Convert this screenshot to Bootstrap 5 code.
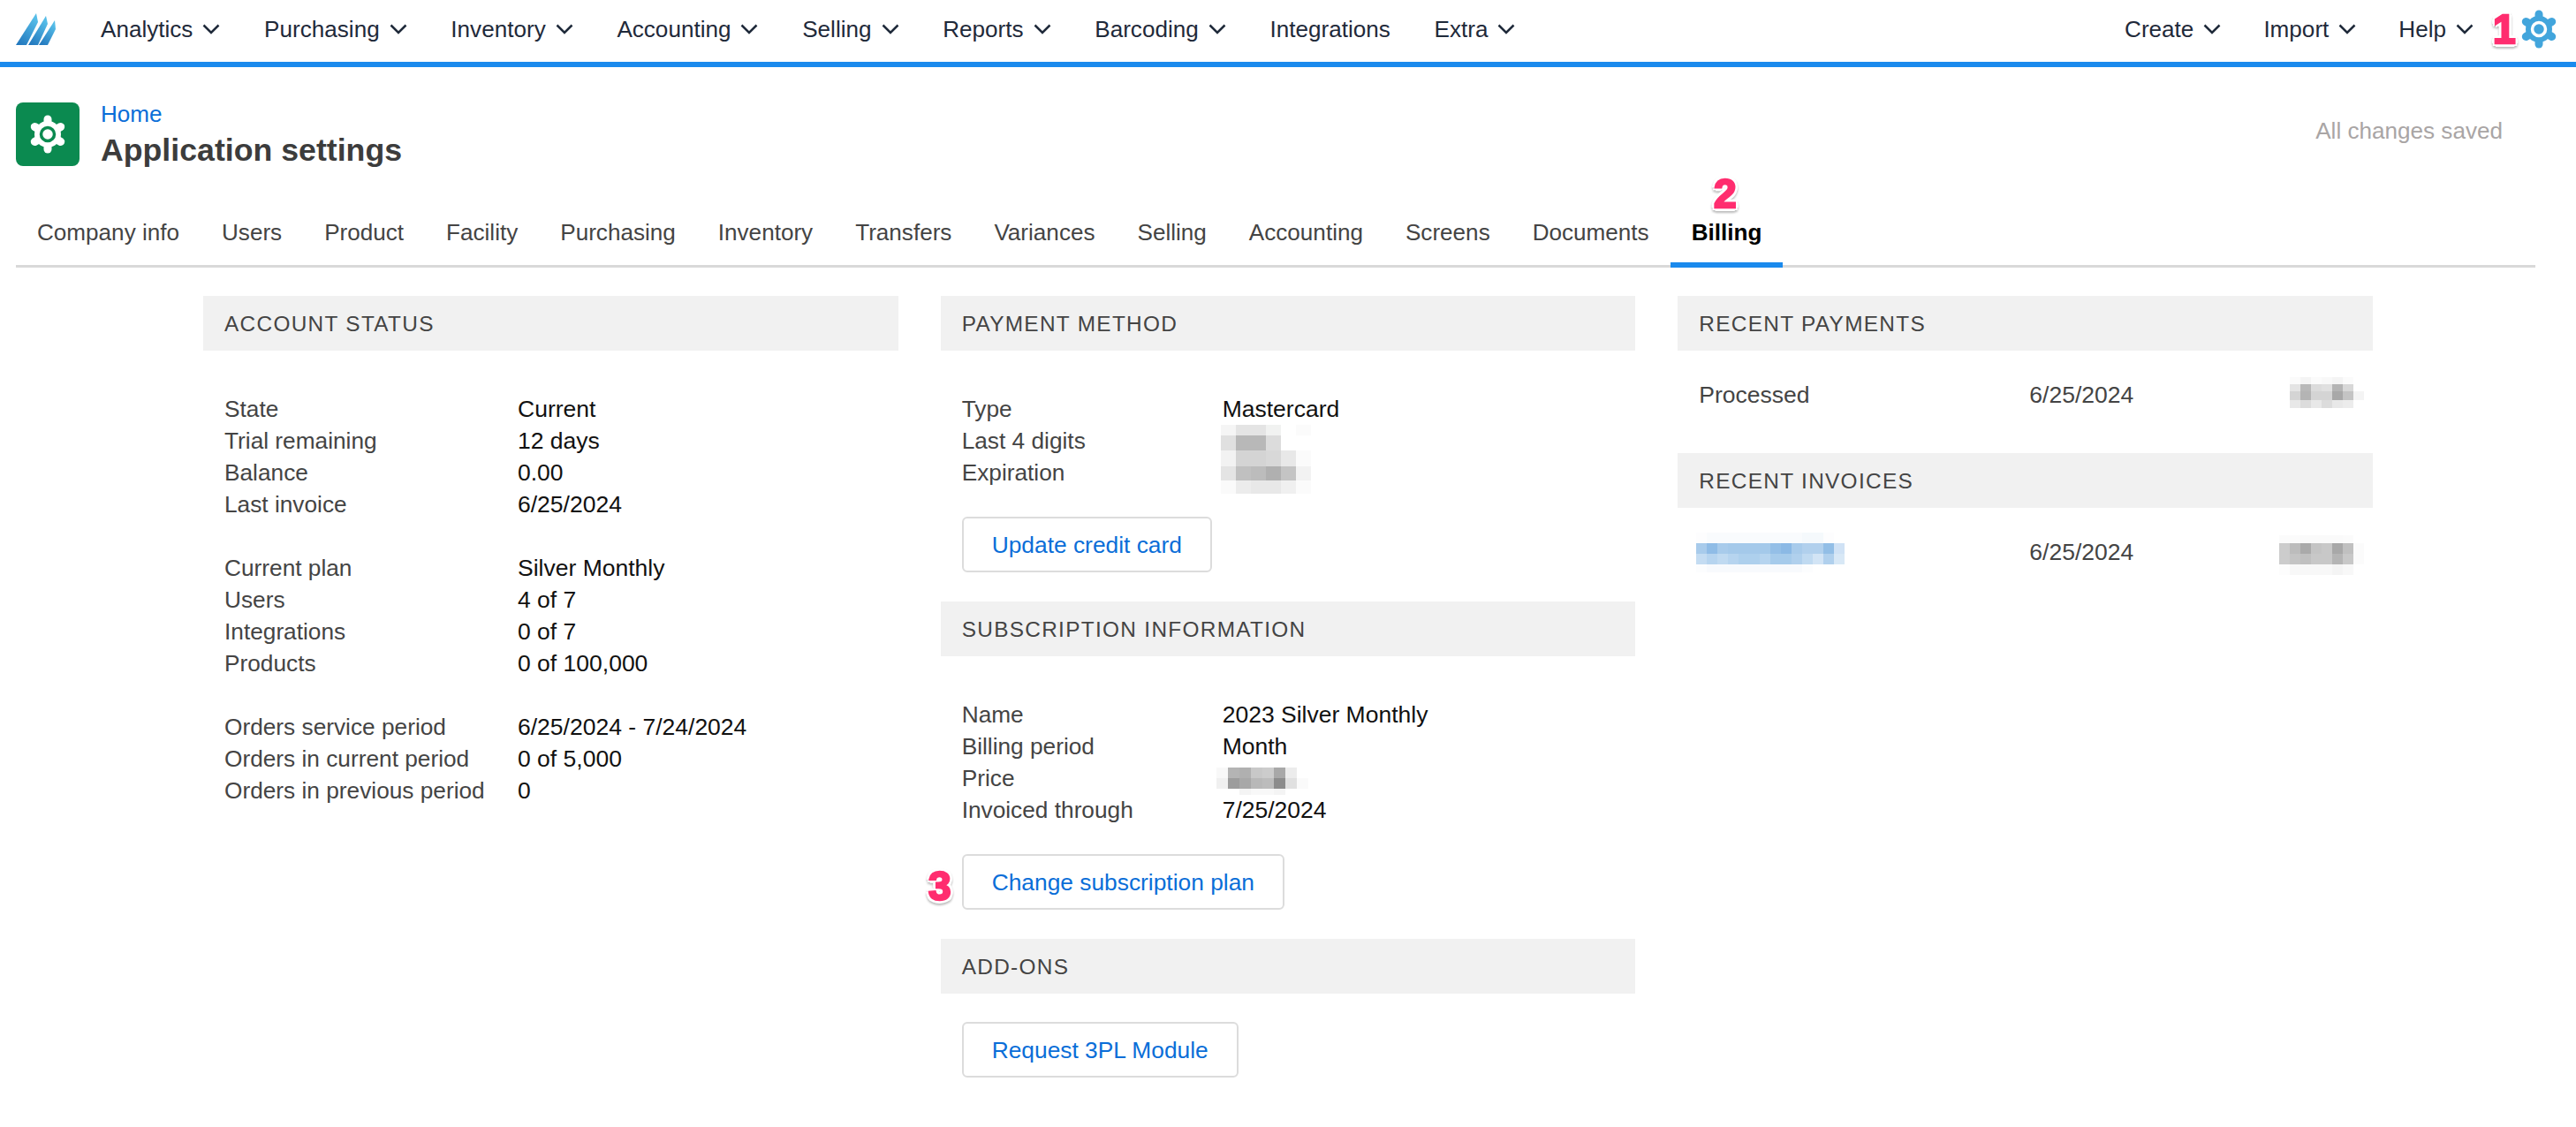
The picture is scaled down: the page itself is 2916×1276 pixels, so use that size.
<!DOCTYPE html>
<html lang="en">
<head>
  <meta charset="UTF-8" />
  <title>Application settings</title>
  <link href="https://cdn.jsdelivr.net/npm/bootstrap@5.3.0/dist/css/bootstrap.min.css" rel="stylesheet" />
  <style>
    body { font-family: "Liberation Sans", Arial, sans-serif; font-size: 26.1px; line-height: 36px; color: #444; background: #fff; min-height: 1276px; }
    .app-bar { height: 76px; border-bottom: 6px solid #1a8aed; padding: 0 20px 4px 18px; flex-wrap: nowrap; }
    .app-bar .navbar-nav { gap: 49.7px; }
    .app-bar.navbar-expand .navbar-nav .nav-link { display: flex; align-items: center; gap: 11px; padding: 0; color: #1f2a3a; line-height: 36px; }
    .app-logo { width: 46px; height: 38px; margin-right: 50px; }
    .chev { width: 20px; height: 12px; }
    .app-bar .right-links { margin-left: auto; margin-right: 52px; gap: 48px; }
    .top-gear { width: 44px; height: 44px; }
    .page-head { padding: 38px 83px 0 18px; }
    .head-icon { width: 72px; height: 72px; background: #0b8a50; border-radius: 8px; margin-top: 2px; }
    .head-icon svg { width: 44px; height: 44px; }
    .head-text { margin-left: 24px; }
    .head-home { color: #0a6ed8; line-height: 30px; text-decoration: none; display: block; }
    .head-title { font-size: 35.7px; line-height: 44px; font-weight: 700; color: #3c3c3c; margin: 4px 0 0; }
    .saved-note { color: #a9a5a5; margin-top: 16px; }
    .tab-strip { margin: 31px 46px 0 18px; border-bottom: 3px solid #d9d9d9; height: 80px; }
    .tab-strip .nav-link { padding: 22px 24px 0; height: 80px; line-height: 36px; color: #444; border-bottom: 6px solid transparent; }
    .tab-strip .nav-link.active { color: #000; font-weight: 700; border-bottom-color: #1a8aed; }
    .sheet { width: 2456px; margin: 32px 0 0 230px; gap: 48px; }
    .sheet-col { flex: 1 1 0; min-width: 0; }
    .panel-head { height: 62px; line-height: 64px; background: #f1f1f1; padding: 0 24px; font-size: 24.4px; letter-spacing: 1.3px; color: #444; text-transform: uppercase; margin: 0; font-weight: 400; }
    .kv-block { padding: 48px 24px 0; }
    .kv-block + .kv-block { padding-top: 36px; }
    .kv-row { display: flex; height: 36px; }
    .kv-name { width: 332px; flex: none; font-size: 26.25px; }
    .narrow .kv-name { width: 295px; }
    .kv-val { color: #111; position: relative; font-size: 26.5px; }
    .plain-btn { display: inline-block; height: 63px; line-height: 60px; padding: 0 32px; border: 2px solid #dcdcdc; border-radius: 6px; font-size: 26.35px; color: #0a6ed8; background: #fff; }
    .btn-wrap { padding: 32px 24px 33px; line-height: 0; }
    .pay-row { display: flex; align-items: center; height: 36px; margin: 32px 0 48px; padding: 0 24px; position: relative; font-size: 26.5px; }
    .pay-date { position: absolute; left: 398px; }
    .blur-box { position: absolute; display: block; }
    .callout { position: absolute; font-size: 46px; line-height: 48px; font-weight: 700; color: #ff2d6f; -webkit-text-stroke: 2.5px #ff2d6f; text-shadow: 4px 0 #fff, -4px 0 #fff, 0 4px #fff, 0 -4px #fff, 3px 3px #fff, -3px 3px #fff, 3px -3px #fff, -3px -3px #fff; filter: drop-shadow(0 2px 1px #bbb); }
    .callout-one { left: 2822px; top: 9px; }
    .callout-two { left: 1940px; top: 195px; }
    .callout-three { left: 1051px; top: 979px; }
  </style>
</head>
<body class="position-relative">
  <nav class="navbar navbar-expand app-bar">
    <svg class="app-logo" viewBox="18 14 46 38">
      <defs>
        <linearGradient id="blade" x1="0" y1="1" x2="0.6" y2="0">
          <stop offset="0" stop-color="#1f73bb" />
          <stop offset="1" stop-color="#56bde8" />
        </linearGradient>
      </defs>
      <path fill="url(#blade)" d="M18 51 L41 15 L43 25 L30 51 Z" />
      <path fill="url(#blade)" d="M32 51 L52 18 L54 27 L43 51 Z" />
      <path fill="url(#blade)" d="M44 51 L62 23 L63 33 L54 51 Z" />
    </svg>
    <ul class="navbar-nav">
      <li class="nav-item"><a class="nav-link" href="#">Analytics <svg class="chev" viewBox="0 0 20 12"><path d="M1.5 1.5 10 10l8.5-8.5" fill="none" stroke="#1f2a3a" stroke-width="2.5" /></svg></a></li>
      <li class="nav-item"><a class="nav-link" href="#">Purchasing <svg class="chev" viewBox="0 0 20 12"><path d="M1.5 1.5 10 10l8.5-8.5" fill="none" stroke="#1f2a3a" stroke-width="2.5" /></svg></a></li>
      <li class="nav-item"><a class="nav-link" href="#">Inventory <svg class="chev" viewBox="0 0 20 12"><path d="M1.5 1.5 10 10l8.5-8.5" fill="none" stroke="#1f2a3a" stroke-width="2.5" /></svg></a></li>
      <li class="nav-item"><a class="nav-link" href="#">Accounting <svg class="chev" viewBox="0 0 20 12"><path d="M1.5 1.5 10 10l8.5-8.5" fill="none" stroke="#1f2a3a" stroke-width="2.5" /></svg></a></li>
      <li class="nav-item"><a class="nav-link" href="#">Selling <svg class="chev" viewBox="0 0 20 12"><path d="M1.5 1.5 10 10l8.5-8.5" fill="none" stroke="#1f2a3a" stroke-width="2.5" /></svg></a></li>
      <li class="nav-item"><a class="nav-link" href="#">Reports <svg class="chev" viewBox="0 0 20 12"><path d="M1.5 1.5 10 10l8.5-8.5" fill="none" stroke="#1f2a3a" stroke-width="2.5" /></svg></a></li>
      <li class="nav-item"><a class="nav-link" href="#">Barcoding <svg class="chev" viewBox="0 0 20 12"><path d="M1.5 1.5 10 10l8.5-8.5" fill="none" stroke="#1f2a3a" stroke-width="2.5" /></svg></a></li>
      <li class="nav-item"><a class="nav-link" href="#">Integrations</a></li>
      <li class="nav-item"><a class="nav-link" href="#">Extra <svg class="chev" viewBox="0 0 20 12"><path d="M1.5 1.5 10 10l8.5-8.5" fill="none" stroke="#1f2a3a" stroke-width="2.5" /></svg></a></li>
    </ul>
    <ul class="navbar-nav right-links">
      <li class="nav-item"><a class="nav-link" href="#">Create <svg class="chev" viewBox="0 0 20 12"><path d="M1.5 1.5 10 10l8.5-8.5" fill="none" stroke="#1f2a3a" stroke-width="2.5" /></svg></a></li>
      <li class="nav-item"><a class="nav-link" href="#">Import <svg class="chev" viewBox="0 0 20 12"><path d="M1.5 1.5 10 10l8.5-8.5" fill="none" stroke="#1f2a3a" stroke-width="2.5" /></svg></a></li>
      <li class="nav-item"><a class="nav-link" href="#">Help <svg class="chev" viewBox="0 0 20 12"><path d="M1.5 1.5 10 10l8.5-8.5" fill="none" stroke="#1f2a3a" stroke-width="2.5" /></svg></a></li>
    </ul>
    <svg class="top-gear" viewBox="0 0 44 44">
      <circle cx="22" cy="22" r="15" fill="#42a5dc" />
      <g stroke="#42a5dc" stroke-width="9" stroke-linecap="round">
        <path d="M22 22V5" /><path d="M22 22V39" /><path d="M22 22 7.3 13.5" /><path d="M22 22 36.7 13.5" /><path d="M22 22 7.3 30.5" /><path d="M22 22 36.7 30.5" />
      </g>
      <circle cx="22" cy="22" r="7.5" fill="#42a5dc" stroke="#fff" stroke-width="3.5" />
    </svg>
  </nav>

  <div class="page-head d-flex">
    <div class="head-icon d-flex align-items-center justify-content-center">
      <svg viewBox="0 0 44 44">
        <circle cx="22" cy="22" r="15" fill="#fff" />
        <g stroke="#fff" stroke-width="9" stroke-linecap="round">
          <path d="M22 22V5" /><path d="M22 22V39" /><path d="M22 22 7.3 13.5" /><path d="M22 22 36.7 13.5" /><path d="M22 22 7.3 30.5" /><path d="M22 22 36.7 30.5" />
        </g>
        <circle cx="22" cy="22" r="7.5" fill="#fff" stroke="#0b8a50" stroke-width="3.5" />
      </svg>
    </div>
    <div class="head-text">
      <a class="head-home" href="#">Home</a>
      <h1 class="head-title">Application settings</h1>
    </div>
    <div class="saved-note ms-auto">All changes saved</div>
  </div>

  <ul class="nav tab-strip">
    <li class="nav-item"><a class="nav-link" href="#">Company info</a></li>
    <li class="nav-item"><a class="nav-link" href="#">Users</a></li>
    <li class="nav-item"><a class="nav-link" href="#">Product</a></li>
    <li class="nav-item"><a class="nav-link" href="#">Facility</a></li>
    <li class="nav-item"><a class="nav-link" href="#">Purchasing</a></li>
    <li class="nav-item"><a class="nav-link" href="#">Inventory</a></li>
    <li class="nav-item"><a class="nav-link" href="#">Transfers</a></li>
    <li class="nav-item"><a class="nav-link" href="#">Variances</a></li>
    <li class="nav-item"><a class="nav-link" href="#">Selling</a></li>
    <li class="nav-item"><a class="nav-link" href="#">Accounting</a></li>
    <li class="nav-item"><a class="nav-link" href="#">Screens</a></li>
    <li class="nav-item"><a class="nav-link" href="#">Documents</a></li>
    <li class="nav-item"><a class="nav-link active" href="#">Billing</a></li>
  </ul>

  <div class="sheet d-flex">
    <section class="sheet-col">
      <h2 class="panel-head">Account status</h2>
      <div class="kv-block">
        <div class="kv-row"><div class="kv-name">State</div><div class="kv-val">Current</div></div>
        <div class="kv-row"><div class="kv-name">Trial remaining</div><div class="kv-val">12 days</div></div>
        <div class="kv-row"><div class="kv-name">Balance</div><div class="kv-val">0.00</div></div>
        <div class="kv-row"><div class="kv-name">Last invoice</div><div class="kv-val">6/25/2024</div></div>
      </div>
      <div class="kv-block">
        <div class="kv-row"><div class="kv-name">Current plan</div><div class="kv-val">Silver Monthly</div></div>
        <div class="kv-row"><div class="kv-name">Users</div><div class="kv-val">4 of 7</div></div>
        <div class="kv-row"><div class="kv-name">Integrations</div><div class="kv-val">0 of 7</div></div>
        <div class="kv-row"><div class="kv-name">Products</div><div class="kv-val">0 of 100,000</div></div>
      </div>
      <div class="kv-block">
        <div class="kv-row"><div class="kv-name">Orders service period</div><div class="kv-val">6/25/2024 - 7/24/2024</div></div>
        <div class="kv-row"><div class="kv-name">Orders in current period</div><div class="kv-val">0 of 5,000</div></div>
        <div class="kv-row"><div class="kv-name">Orders in previous period</div><div class="kv-val">0</div></div>
      </div>
    </section>

    <section class="sheet-col narrow">
      <h2 class="panel-head">Payment method</h2>
      <div class="kv-block">
        <div class="kv-row"><div class="kv-name">Type</div><div class="kv-val">Mastercard</div></div>
        <div class="kv-row"><div class="kv-name">Last 4 digits</div><div class="kv-val"><svg class="blur-box" data-cw="17" data-rows="12,17,18,16,15" data-cells="f5f5f5 e4e4e4 e4e4e4 f1f2f1 fff fbfbfb|e0e0e0 b8b8b8 b8b8b8 dcdcdc fff fff|f2f2f2 d4d4d4 d4d4d4 d8d8d8 e8e8e8 fbfbfb|e4e4e4 c0c0c0 bcbcbc b0b0b0 c4c4c4 f2f2f2|fafafa ececec e8e8e8 e8e8e8 f0f0f0 fbfbfb" style="left:-2px;top:0"></svg></div></div>
        <div class="kv-row"><div class="kv-name">Expiration</div><div class="kv-val"></div></div>
      </div>
      <div class="btn-wrap"><a class="btn plain-btn" href="#">Update credit card</a></div>

      <h2 class="panel-head">Subscription information</h2>
      <div class="kv-block">
        <div class="kv-row"><div class="kv-name">Name</div><div class="kv-val">2023 Silver Monthly</div></div>
        <div class="kv-row"><div class="kv-name">Billing period</div><div class="kv-val">Month</div></div>
        <div class="kv-row"><div class="kv-name">Price</div><div class="kv-val"><svg class="blur-box" data-cw="13" data-rows="12,12,7" data-cells="f8f8f8 b4b4b4 b0b0b0 c8c8c8 cccccc a8a8a8 ececec fff|f0f0f0 9c9c9c a8a8a8 b8b8b8 bcbcbc 8c8c8c e0e0e0 fafafa|fff fff f4f4f4 f8f8f8 f8f8f8 f4f4f4 fff fff" style="left:-7px;top:6px"></svg></div></div>
        <div class="kv-row"><div class="kv-name">Invoiced through</div><div class="kv-val">7/25/2024</div></div>
      </div>
      <div class="btn-wrap"><a class="btn plain-btn" href="#">Change subscription plan</a></div>

      <h2 class="panel-head">Add-ons</h2>
      <div class="btn-wrap"><a class="btn plain-btn" href="#">Request 3PL Module</a></div>
    </section>

    <section class="sheet-col">
      <h2 class="panel-head">Recent payments</h2>
      <div class="pay-row">
        <span>Processed</span>
        <span class="pay-date">6/25/2024</span>
        <svg class="blur-box" data-cw="12" data-rows="8,8,10,9" data-cells="fbfbfb f4f4f4 fbfbfb f8f8f8 f4f4f4 fbfbfb fff|e4e4e4 b8b8b8 dcdcdc e0e0e0 b4b4b4 d8d8d8 fff|d4d4d4 b4b4b4 d4d4d4 d4d4d4 a8a8a8 c4c4c4 f4f4f4|e8e8e8 dcdcdc e8e8e8 dcdcdc e8e8e8 ececec fff" style="left:693px;top:-2px"></svg>
      </div>
      <h2 class="panel-head">Recent invoices</h2>
      <div class="pay-row">
        <svg class="blur-box" data-cw="12" data-rows="12,12,12,9" data-cells="fdfdfe f9fbfd f9fbfd f9fbfd f9fbfd f9fbfd f9fbfd f9fbfd f9fbfd f9fbfd f5f9fc f5f9fc fdfdfe fff|a8cbeb 8fbce6 a8cbeb a4c9ea a4c9ea a4c9ea a4c9ea 94bfe7 8bb9e5 a8cbeb b1d0ed b1d0ed 92bee6 d0e2f5|c4dcf2 b6d4ef c0daf1 b6d4ef aed0ed aed0ed b6d4ef a6cbeb a6cbeb b0d0ed c0daf1 d2e4f5 b0d0ed d8e8f6|fcfdfe f8fafd f8fafd f8fafd f8fafd f8fafd f8fafd f8fafd f8fafd f8fafd fcfdfe fff fff fff" style="left:21px;top:-4px"></svg>
        <span class="pay-date">6/25/2024</span>
        <svg class="blur-box" data-cw="12" data-rows="9,12,12,12" data-cells="fbfbfb fbfbfb fafafa fafafa fafafa fafafa fbfbfb fff|cccccc bcbcbc aaaaaa c4c4c4 c8c8c8 a8a8a8 c0c0c0 fbfbfb|cccccc c4c4c4 c0c0c0 c8c8c8 c8c8c8 b4b4b4 c8c8c8 fbfbfb|fdfdfd f8f8f8 f8f8f8 f8f8f8 f8f8f8 f4f4f4 f8f8f8 fff" style="left:681px;top:-1px"></svg>
      </div>
    </section>
  </div>

  <span class="callout callout-one">1</span>
  <span class="callout callout-two">2</span>
  <span class="callout callout-three">3</span>

  <script src="https://cdn.jsdelivr.net/npm/bootstrap@5.3.0/dist/js/bootstrap.bundle.min.js"></script>
  <script>
    // pixelated redaction blocks
    document.querySelectorAll(".blur-box").forEach(function (box) {
      const cw = parseInt(box.dataset.cw);
      const heights = box.dataset.rows.split(",").map(Number);
      const rows = box.dataset.cells.split("|").map(function (r) { return r.split(" "); });
      let y = 0;
      rows.forEach(function (cells, i) {
        cells.forEach(function (color, j) {
          const rect = document.createElementNS("http://www.w3.org/2000/svg", "rect");
          rect.setAttribute("x", j * cw);
          rect.setAttribute("y", y);
          rect.setAttribute("width", cw);
          rect.setAttribute("height", heights[i]);
          rect.setAttribute("fill", "#" + color);
          box.appendChild(rect);
        });
        y += heights[i];
      });
      box.setAttribute("width", rows[0].length * cw);
      box.setAttribute("height", y);
    });
  </script>
</body>
</html>
